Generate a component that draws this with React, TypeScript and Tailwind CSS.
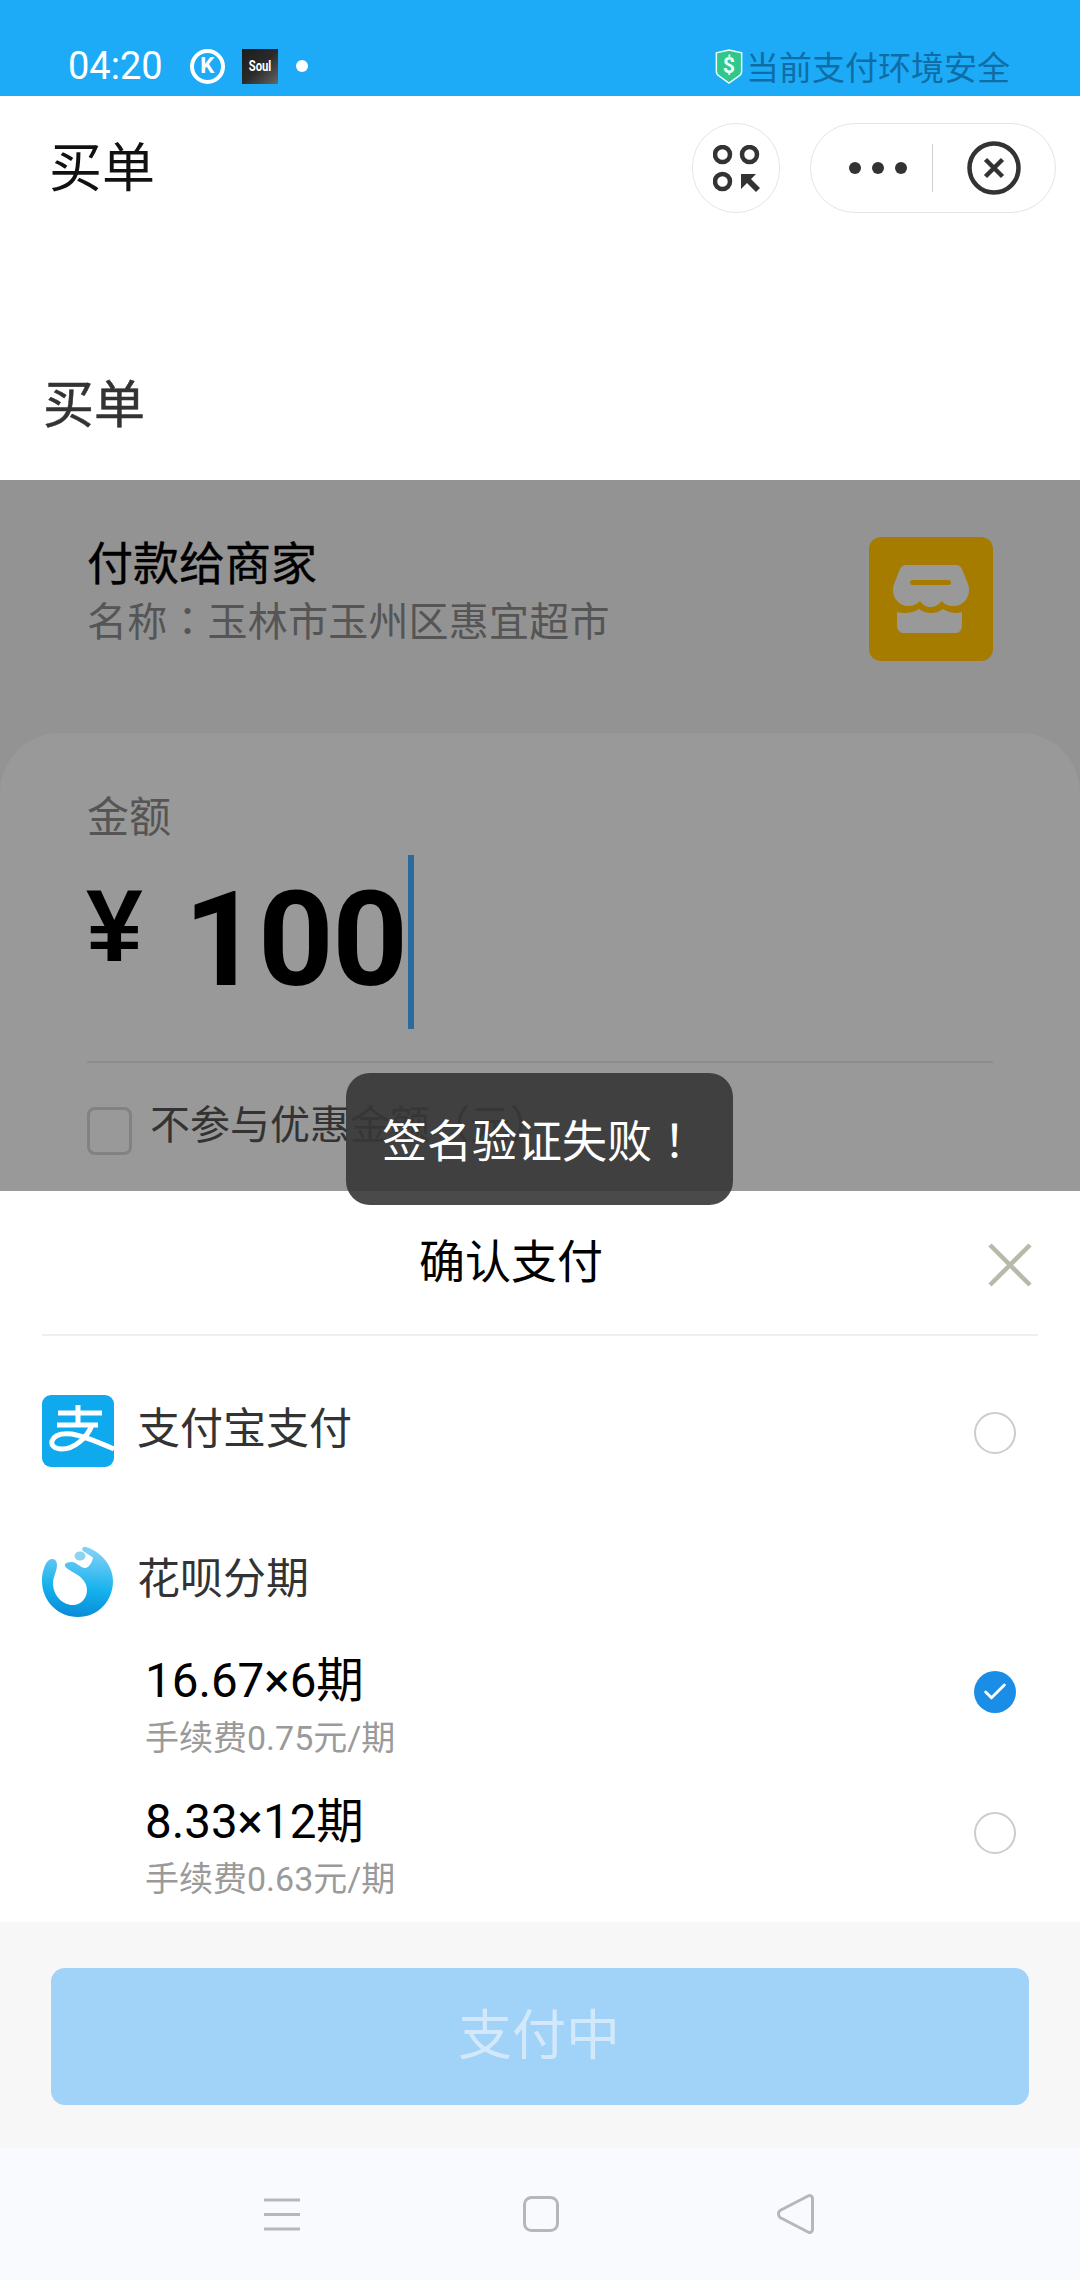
import { Check } from "lucide-react";

const cjk = { fontFamily: '"Noto Sans CJK SC", sans-serif' };
const latinFirst = { fontFamily: 'Roboto, "Noto Sans CJK SC", sans-serif' };
// full-width punctuation sits in the middle of its cell in this face
const centeredPunct = { fontFamily: '"Noto Sans CJK TC", sans-serif' };

function Radio({ checked = false }: { checked?: boolean }) {
  if (checked) {
    return (
      <div className="w-[42px] h-[42px] rounded-full bg-[#1a8de6] flex items-center justify-center">
        <Check size={28} color="white" strokeWidth={2.5} />
      </div>
    );
  }
  return <div className="w-[42px] h-[42px] rounded-full border-2 border-[#cccccc]" />;
}

function MiniProgramIcon() {
  return (
    <svg width="47" height="47" viewBox="0 0 47 47" fill="none">
      <circle cx="9.500" cy="9.500" r="7.500" stroke="#333" strokeWidth="4.500" />
      <circle cx="36.500" cy="9.500" r="7.500" stroke="#333" strokeWidth="4.500" />
      <circle cx="9.500" cy="36.500" r="7.500" stroke="#333" strokeWidth="4.500" />
      <path d="M28 29h15l-5 5 9 9-4 4-9-9-6 6z" fill="#333" />
    </svg>
  );
}

function CloseCircle() {
  return (
    <svg width="54" height="54" viewBox="0 0 54 54" fill="none">
      <circle cx="27" cy="27" r="24.500" stroke="#333" strokeWidth="4.500" />
      <path d="M18.500 18.500l17 17M35.500 18.500l-17 17" stroke="#333" strokeWidth="4.500" />
    </svg>
  );
}

function ShopIcon() {
  return (
    <svg width="78" height="68" viewBox="0 0 78 68" fill="#999999">
      <path d="M14 0H64C67 0 69 2 70 4L76 19C80 30 72 41 62 41C56 41 52 39 50 36C46 40 43 42 39 42C34 42 31 40 28 36C25 39 21 41 16 41C6 41-2 30 2 19L8 4C9 2 11 0 14 0Z" />
      <path d="M5 47C12 49 21 48 27 44C31 47 35 48 39 48C43 48 47 47 51 44C57 48 64 49 70 47V61C70 65 67 68 64 68H11C8 68 5 65 5 61Z" />
      <rect x="18" y="15" width="41" height="5" rx="2.500" fill="#a67c00" />
    </svg>
  );
}

function AlipayIcon() {
  return (
    <svg width="72" height="72" viewBox="0 0 72 72">
      <rect width="72" height="72" rx="9" fill="#0fa9ee" />
      <path d="M16 18h44M36 10v20M15 30h41" stroke="white" strokeWidth="5" fill="none" />
      <path d="M50 30C45 43 32 54 20 54C12 54 9 50 10 46C12 40 20 38 30 39C42 41 58 48 72 54" stroke="white" strokeWidth="5" fill="none" />
    </svg>
  );
}

function HuabeiIcon() {
  return (
    <svg width="72" height="72" viewBox="0 0 72 72">
      <defs>
        <linearGradient id="hb" x1="0.55" y1="0" x2="0.45" y2="1">
          <stop offset="0" stopColor="#86d2f6" />
          <stop offset="0.6" stopColor="#14b1ee" />
          <stop offset="1" stopColor="#0a8ad6" />
        </linearGradient>
      </defs>
      <path d="M10 14C4 14 0 26 0 36C0 56 16 72 36 72C56 72 71 56 71 36C71 20 58 6 44 2C41 1 39 4 41 6C45 9 50 11 51 13C50 17 47 23 43 23C38 23 35 17 30 17C26 17 22 18 23 21C24 24 30 26 34 29C41 33 45 39 45 45C45 54 38 60 31 60C20 60 11 50 11 38C11 32 15 26 15 20C15 16 13 14 10 14Z" fill="url(#hb)" />
      <ellipse cx="38" cy="11" rx="5.500" ry="4.500" fill="#8fd3f3" />
    </svg>
  );
}

function Shield() {
  return (
    <svg width="30" height="35" viewBox="0 0 30 36">
      <path d="M15 1l13 3v19c0 2-1 4-3 5l-10 7-10-7c-2-1-3-3-3-5V4z" fill="#2fc78b" stroke="#e8fff5" strokeWidth="1.500" />
      <text x="15" y="25" textAnchor="middle" fontSize="22" fontWeight="700" fill="#e8fff5" fontFamily="Roboto, sans-serif">$</text>
    </svg>
  );
}

function Installment({ title, fee, checked }: { title: string; fee: string; checked?: boolean }) {
  return (
    <div className="flex items-center justify-between pl-[145px] pr-[64px] h-[141px]">
      <div className="flex flex-col pt-[18px]" style={latinFirst}>
        <span className="text-[47.5px] leading-[56px] text-black">{title}</span>
        <span className="text-[34px] leading-[42px] text-[#9a9a9a] mt-[8px]">{fee}</span>
      </div>
      <div className="mt-[-10px]">
        <Radio checked={checked} />
      </div>
    </div>
  );
}

export default function App() {
  return (
    <div className="relative w-[1080px] h-[2280px] overflow-hidden flex flex-col bg-white" style={cjk}>
      <div className="h-[96px] bg-[#1dabf8] flex items-start justify-between pl-[68px] pr-[70px] pt-[46px]">
        <div className="flex items-center h-[40px]">
          <span className="text-[38px] leading-[40px] text-white" style={{ fontFamily: "Roboto, sans-serif" }}>04:20</span>
          <div className="ml-[27px] w-[35px] h-[35px] rounded-full border-[4px] border-white flex items-center justify-center text-white text-[22px] font-bold leading-none" style={{ fontFamily: "Roboto, sans-serif" }}>K</div>
          <div className="ml-[17px] w-[36px] h-[35px] bg-gradient-to-br from-[#1c1c1c] via-[#2a2a2a] to-[#666666] flex items-center justify-center text-white text-[15px] font-bold leading-none" style={{ fontFamily: "Roboto, sans-serif" }}>
            <span className="scale-x-75">Soul</span>
          </div>
          <div className="ml-[18px] w-[12px] h-[12px] rounded-full bg-white" />
        </div>
        <div className="flex items-center h-[40px] gap-[2px]">
          <Shield />
          <span className="text-[33px] leading-[40px] text-[#0f6da6] mt-[-1px]">当前支付环境安全</span>
        </div>
      </div>

      <div className="h-[384px] flex flex-col">
        <div className="flex items-center justify-between h-[144px] pl-[49px] pr-[24px]">
          <span className="text-[53px] leading-[60px] text-[#111111] mt-[-8px]">买单</span>
          <div className="flex items-center gap-[30px]">
            <div className="w-[88px] h-[90px] rounded-full border-[1.5px] border-[#e4e4e4] flex items-center justify-center">
              <MiniProgramIcon />
            </div>
            <div className="w-[246px] h-[90px] rounded-full border-[1.5px] border-[#e4e4e4] flex items-center">
              <div className="flex gap-[11px] ml-[38px]">
                <div className="w-[12px] h-[12px] rounded-full bg-[#333]" />
                <div className="w-[12px] h-[12px] rounded-full bg-[#333]" />
                <div className="w-[12px] h-[12px] rounded-full bg-[#333]" />
              </div>
              <div className="ml-[25px] w-[1px] h-[48px] bg-[#d0d0d0]" />
              <div className="ml-[34px]">
                <CloseCircle />
              </div>
            </div>
          </div>
        </div>
        <div className="mt-[131px] pl-[43px] text-[51px] leading-[60px] text-[#333333] [-webkit-text-stroke:0.5px_#333333]">买单</div>
      </div>

      <div className="h-[253px] bg-[#939393] flex items-start justify-between pl-[87px] pr-[87px] pt-[57px]">
        <div className="flex flex-col">
          <span className="text-[46px] leading-[50px] text-black mt-[-2px] [-webkit-text-stroke:0.4px_black]">付款给商家</span>
          <span className="text-[40px] leading-[50px] text-[#555555] mt-[9px] tracking-[0.2px]">
            名称<span style={centeredPunct}>：</span>玉林市玉州区惠宜超市
          </span>
        </div>
        <div className="w-[124px] h-[124px] rounded-[12px] bg-[#a67c00] flex items-center justify-center">
          <ShopIcon />
        </div>
      </div>

      <div className="h-[458px] bg-[#939393]">
        <div className="h-full bg-[#999999] rounded-t-[60px] px-[87px] pt-[56px]">
          <div className="text-[42px] leading-[50px] text-[#555555]">金额</div>
          <div className="flex items-start mt-[16px] h-[174px]">
            <span className="mt-[20px] ml-[-1px] text-[102px] leading-none font-bold text-black" style={{ fontFamily: '"Liberation Sans", sans-serif' }}>¥</span>
            <span className="ml-[41px] mt-[19px] text-[132px] leading-none font-bold text-black tracking-[-1.500px]" style={{ fontFamily: "Roboto, sans-serif" }}>100</span>
            <div className="ml-[2px] w-[6px] h-[174px] bg-[#2a6a9c]" />
          </div>
          <div className="mt-[32px] h-[2px] bg-[#8c8c8c]" />
          <div className="flex items-start mt-[44px]">
            <div className="w-[45px] h-[48px] rounded-[8px] border-[3px] border-[#828282]" />
            <span className="ml-[18px] text-[40px] leading-[44px] text-[#333333] mt-[-7px]">不参与优惠金额（元）</span>
          </div>
        </div>
      </div>

      <div className="h-[731px] bg-white flex flex-col">
        <div className="relative flex items-center justify-center h-[145px] mx-[42px] border-b-2 border-[#eeeeee]">
          <span className="text-[46px] leading-[60px] text-black mr-[58px] mt-[-10px]">确认支付</span>
          <svg className="absolute right-[6px] top-[52px]" width="44" height="44" viewBox="0 0 44 44">
            <path d="M2 2l40 40M42 2L2 42" stroke="#b9b9a9" strokeWidth="4.500" />
          </svg>
        </div>
        <div className="flex items-center justify-between pl-[42px] pr-[64px] mt-[59px] h-[72px]">
          <div className="flex items-center gap-[23px]">
            <AlipayIcon />
            <span className="text-[43px] leading-[60px] text-[#333333] mt-[-12px]">支付宝支付</span>
          </div>
          <div className="mt-[4px]">
            <Radio />
          </div>
        </div>
        <div className="flex items-center gap-[23px] pl-[42px] mt-[78px] h-[72px]">
          <HuabeiIcon />
          <span className="text-[43px] leading-[60px] text-[#333333] mt-[-12px]">花呗分期</span>
        </div>
        <div className="mt-[9px]">
          <Installment title="16.67×6期" fee="手续费0.75元/期" checked />
          <Installment title="8.33×12期" fee="手续费0.63元/期" />
        </div>
      </div>

      <div className="h-[226px] bg-[#f7f7f7] px-[51px] pt-[46px]">
        <div className="h-[137px] rounded-[14px] bg-[#a1d2f7] flex items-center justify-center text-[54px] text-[#d3e9fb] pb-[10px] pr-[2px]">支付中</div>
      </div>

      <div className="h-[132px] bg-[#f9fafe] flex items-center pl-[264px]">
        <svg width="36" height="33" viewBox="0 0 36 33">
          <path d="M0 2h36M0 16.500h36M0 31h36" stroke="#b7b7b9" strokeWidth="3" />
        </svg>
        <svg className="ml-[223px]" width="36" height="36" viewBox="0 0 36 36">
          <rect x="1.500" y="1.500" width="33" height="33" rx="7" fill="none" stroke="#b7b7b9" strokeWidth="3" />
        </svg>
        <svg className="ml-[218px]" width="37" height="40" viewBox="0 0 37 40">
          <path d="M31 2L3 16.500c-2 2-2 5 0 7L31 38c2 1 4.500 0 4.500-2.500V4.500C35.500 2 33 1 31 2z" fill="none" stroke="#b7b7b9" strokeWidth="3" strokeLinejoin="round" />
        </svg>
      </div>

      <div className="absolute left-[346px] top-[1073px] w-[387px] h-[132px] rounded-[24px] bg-[#363636]/90 flex items-center justify-center text-[45px] text-white">
        签名验证失败<span style={centeredPunct}>！</span>
      </div>
    </div>
  );
}
